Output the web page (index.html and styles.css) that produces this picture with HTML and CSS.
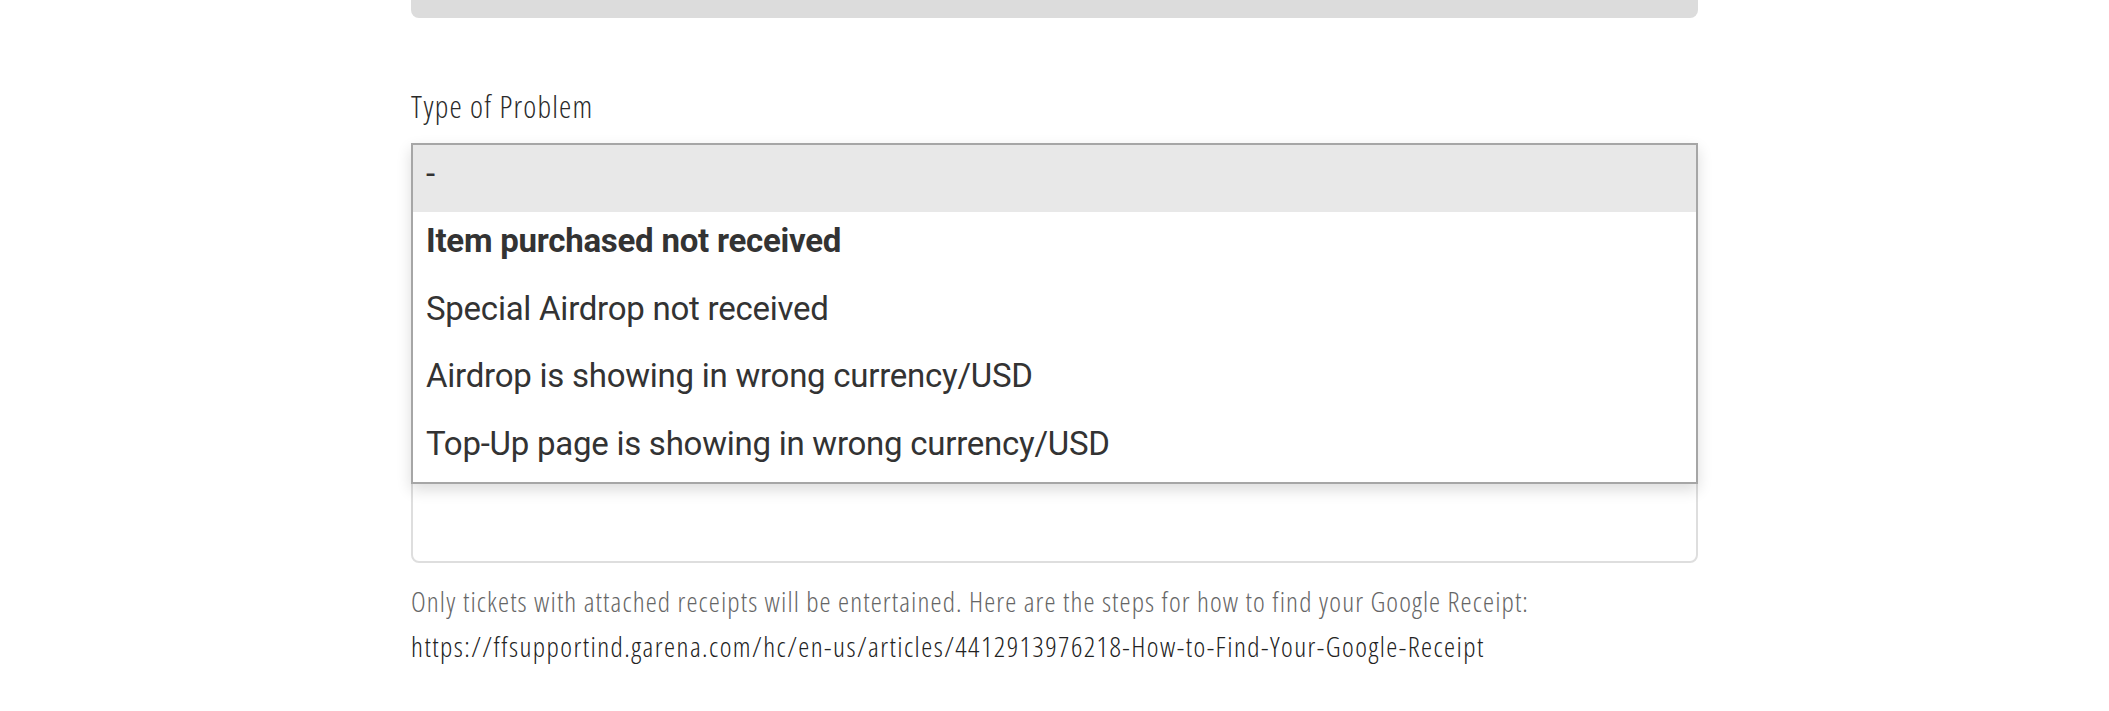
FILE: index.html
```html
<!DOCTYPE html>
<html lang="en">
<head>
<meta charset="utf-8">
<title>Type of Problem</title>
<link rel="stylesheet" href="styles.css">
</head>
<body>
<div class="form">
  <div class="prev-field"></div>
  <div class="label">Type of Problem</div>
  <div class="field-wrap">
    <div class="field-box"></div>
    <ul class="dropdown">
      <li class="opt opt-active">-</li>
      <li class="opt opt-selected">Item purchased not received</li>
      <li class="opt">Special Airdrop not received</li>
      <li class="opt">Airdrop is showing in wrong currency/USD</li>
      <li class="opt">Top-Up page is showing in wrong currency/USD</li>
    </ul>
  </div>
  <div class="hint">
    <p class="hint-line">Only tickets with attached receipts will be entertained. Here are the steps for how to find your Google Receipt:</p>
    <p class="hint-link">https://ffsupportind.garena.com/hc/en-us/articles/4412913976218-How-to-Find-Your-Google-Receipt</p>
  </div>
</div>
</body>
</html>
```

FILE: styles.css
```css
html, body {
  margin: 0;
  padding: 0;
  background: #ffffff;
}

.form {
  width: 1287px;
  margin: 0 auto;
  font-family: "Open Sans", "DejaVu Sans Condensed", sans-serif;
  font-stretch: 75%;
  font-weight: 300;
}

.prev-field {
  height: 18px;
  background: #dcdcdc;
  border-radius: 0 0 8px 8px;
}

.label {
  margin-top: 69px;
  font-size: 31px;
  line-height: 38px;
  letter-spacing: 1.2px;
  color: #2a2a2a;
}

.field-wrap {
  position: relative;
  margin-top: 18px;
}

.field-box {
  height: 416px;
  border: 2px solid #dedede;
  border-radius: 8px;
  background: #ffffff;
}

.dropdown {
  position: absolute;
  top: 0;
  left: 0;
  right: 0;
  margin: 0;
  padding: 0;
  list-style: none;
  background: #ffffff;
  border: 2px solid #a6a6a6;
  box-shadow: 0 6px 14px rgba(0, 0, 0, 0.14);
  font-family: Roboto, "Liberation Sans", sans-serif;
  font-stretch: 100%;
  font-weight: 400;
  font-size: 33px;
  letter-spacing: -0.25px;
  color: #333333;
}

.opt {
  height: 67.4px;
  box-sizing: border-box;
  padding: 9px 13px 18px;
  line-height: 39px;
  white-space: nowrap;
}

.opt-active {
  background: #e8e8e8;
}

.opt-selected {
  font-weight: 700;
}

.hint {
  margin-top: 16px;
  font-size: 28px;
  line-height: 45px;
  letter-spacing: 1.1px;
}

.hint-line {
  margin: 0;
  color: #666666;
  white-space: nowrap;
}

.hint-link {
  margin: 0;
  color: #222222;
  letter-spacing: 1.45px;
  white-space: nowrap;
}
```
